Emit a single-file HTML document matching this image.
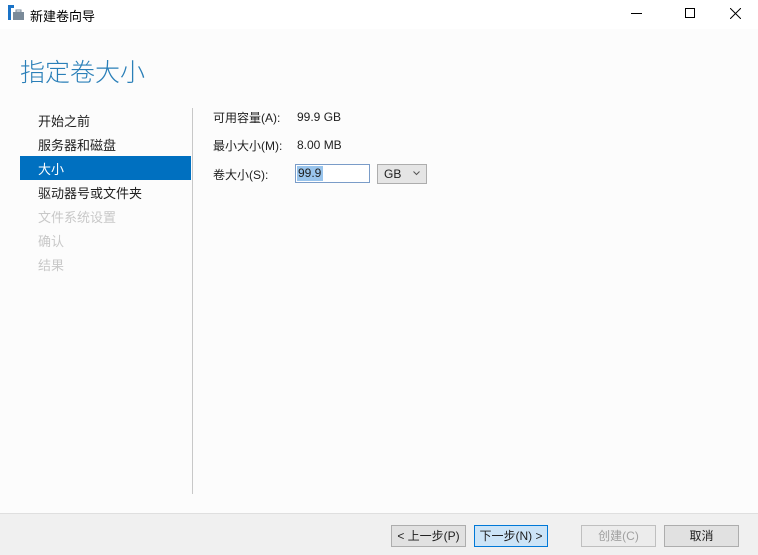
<!DOCTYPE html>
<html><head><meta charset="utf-8"><style>
*{margin:0;padding:0;box-sizing:border-box}
body{width:758px;height:555px;overflow:hidden;background:#fcfcfc;font-family:"Liberation Sans","Microsoft YaHei","Noto Sans CJK SC",sans-serif;font-size:13px;color:#1e1e1e;position:relative}
.a{position:absolute;white-space:nowrap}
.tb{position:absolute;left:0;top:0;width:758px;height:29px;background:#fff}
.nav{position:absolute;left:38px;font-size:13px;height:24px;line-height:24px}
.btn{position:absolute;top:525px;height:22px;border:1px solid #adadad;background:#e1e1e1;font-size:12px;text-align:center;line-height:20px}
</style></head><body>
<div class="tb"></div>
<svg class="a" style="left:8px;top:5px" width="16" height="16" viewBox="0 0 16 16"><rect x="0" y="0" width="6" height="3" fill="#1a73c7"/><rect x="0" y="3" width="3" height="12" fill="#1a73c7"/><rect x="5" y="7" width="11" height="8" fill="#7a8a99"/><rect x="8" y="5" width="5" height="2" fill="none" stroke="#7a8a99"/></svg>
<div class="a" style="left:30px;top:6px;font-size:13px;color:#000">新建卷向导</div>
<div class="a" style="left:631px;top:13px;width:11px;height:1px;background:#000"></div>
<div class="a" style="left:685px;top:8px;width:10px;height:10px;border:1px solid #000"></div>
<svg class="a" style="left:730px;top:8px" width="11" height="11"><path d="M0 0L11 11M11 0L0 11" stroke="#000" stroke-width="1"/></svg>
<div class="a" style="left:20px;top:53px;font-size:25px;color:#2a7fb8;font-weight:300">指定卷大小</div>
<div class="a" style="left:20px;top:156px;width:171px;height:24px;background:#0070c0"></div>
<div class="nav a" style="top:110px">开始之前</div>
<div class="nav a" style="top:134px">服务器和磁盘</div>
<div class="nav a" style="top:158px;color:#fff">大小</div>
<div class="nav a" style="top:182px">驱动器号或文件夹</div>
<div class="nav a" style="top:206px;color:#c8c8c8">文件系统设置</div>
<div class="nav a" style="top:230px;color:#c8c8c8">确认</div>
<div class="nav a" style="top:254px;color:#c8c8c8">结果</div>
<div class="a" style="left:192px;top:108px;width:1px;height:386px;background:#c8c8c8"></div>
<div class="a" style="left:213px;top:109px;font-size:12px">可用容量(A):</div>
<div class="a" style="left:297px;top:110px;font-size:12px">99.9 GB</div>
<div class="a" style="left:213px;top:137px;font-size:12px">最小大小(M):</div>
<div class="a" style="left:297px;top:138px;font-size:12px">8.00 MB</div>
<div class="a" style="left:213px;top:166px;font-size:12px">卷大小(S):</div>
<div class="a" style="left:295px;top:164px;width:75px;height:19px;border:1px solid #7a9cc8;background:#fff"></div>
<div class="a" style="left:297px;top:166px;height:15px;width:26px;background:#99c4ec"></div>
<div class="a" style="left:298px;top:166px;font-size:12px">99.9</div>
<div class="a" style="left:377px;top:164px;width:50px;height:20px;border:1px solid #adadad;background:#e5e5e5"></div>
<div class="a" style="left:384px;top:167px;font-size:12px">GB</div>
<svg class="a" style="left:413px;top:171px" width="7" height="5"><path d="M0.5 0.5L3.5 3.5L6.5 0.5" stroke="#555" fill="none"/></svg>
<div class="a" style="left:0;top:513px;width:758px;height:42px;background:#f0f0f0;border-top:1px solid #dfdfdf"></div>
<div class="btn" style="left:391px;width:75px">&lt; 上一步(P)</div>
<div class="btn" style="left:474px;width:74px;background:#cce4f7;border-color:#0078d7">下一步(N) &gt;</div>
<div class="btn" style="left:581px;width:75px;background:#ececec;border-color:#bfbfbf;color:#a0a0a0">创建(C)</div>
<div class="btn" style="left:664px;width:75px">取消</div>
</body></html>
